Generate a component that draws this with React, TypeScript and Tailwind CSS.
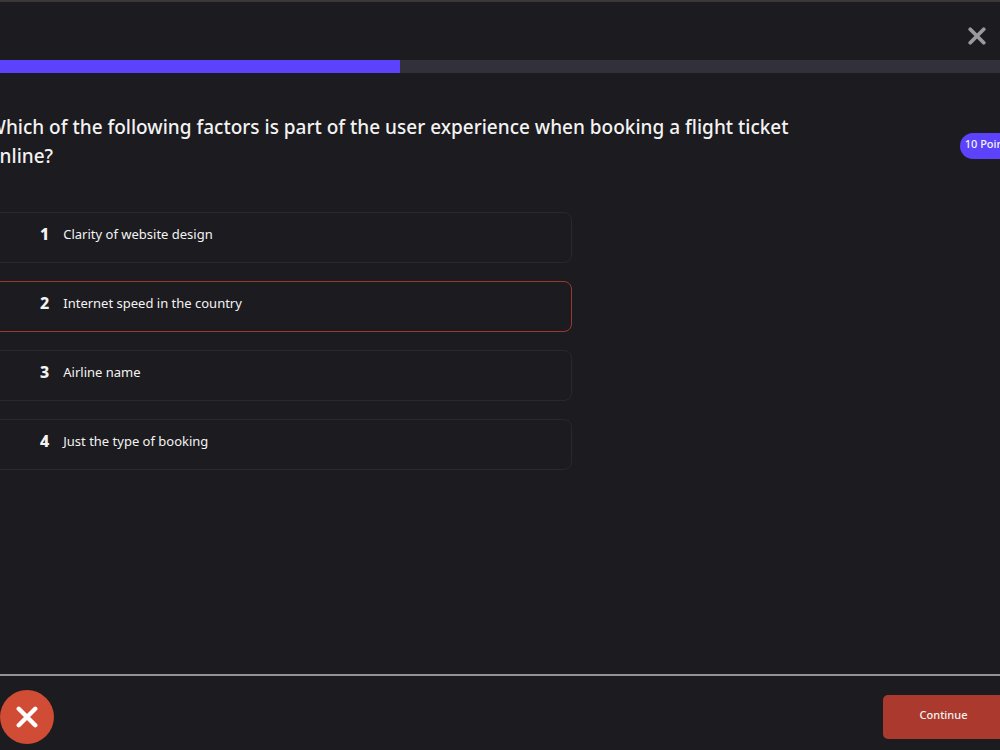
import { useState } from "react";

const options = [
  "Clarity of website design",
  "Internet speed in the country",
  "Airline name",
  "Just the type of booking",
];

function Cross({ className, weight }: { className: string; weight: number }) {
  return (
    <svg viewBox="0 0 24 24" fill="none" stroke="currentColor" strokeWidth={weight} strokeLinecap="round" className={className} aria-hidden="true">
      <path d="M3 3 21 21M21 3 3 21" />
    </svg>
  );
}

export default function App() {
  const [selected, setSelected] = useState(1);

  return (
    <div className="flex min-h-screen flex-col overflow-hidden border-t-2 border-[#3c3837] bg-[#1c1b1f] font-['Noto_Sans',sans-serif] text-[#f3f3f3]">
      <header className="flex h-[58px] items-center justify-end pt-2.5 pr-[11px]">
        <button type="button" aria-label="Close" className="flex size-6 items-center justify-center text-[#9a999f]">
          <Cross className="size-[18px]" weight={5} />
        </button>
      </header>

      <div role="progressbar" aria-label="Quiz progress" aria-valuenow={40} aria-valuemin={0} aria-valuemax={100} className="h-[13px] bg-[#32313b]">
        <div className="h-full w-2/5 bg-[#5c42fb]" />
      </div>

      <main className="-ml-3 flex-1 pt-10">
        <div className="-mr-[18px] flex items-start justify-between">
          <h1 className="max-w-[830px] text-[19px] leading-[29px] font-medium">
            Which of the following factors is part of the user experience when booking a flight ticket online?
          </h1>
          <span className="mt-5 flex h-[26px] shrink-0 items-start rounded-full bg-[#5c42fb] px-[5px] pt-[3px] text-[11px] leading-4 font-medium whitespace-nowrap">
            10 Points
          </span>
        </div>

        <ol className="mt-[41px] flex max-w-[584px] flex-col gap-[18px]">
          {options.map((option, index) => (
            <li key={option}>
              <button
                type="button"
                aria-pressed={selected === index}
                onClick={() => setSelected(index)}
                className={`flex h-[51px] w-full items-start gap-3.5 rounded-lg border pt-[11px] pl-[51px] text-left leading-5 ${
                  selected === index ? "border-[#9d382f]" : "border-[#29282d]"
                }`}
              >
                <span className="text-[16px] font-extrabold">{index + 1}</span>
                <span className="text-[13px]">{option}</span>
              </button>
            </li>
          ))}
        </ol>
      </main>

      <footer className="flex h-[76px] items-start justify-between border-t-2 border-[#929596]">
        <span role="img" aria-label="Incorrect answer" className="mt-3.5 flex size-[54px] items-center justify-center rounded-full bg-[#d04c35] text-white">
          <Cross className="size-[22px]" weight={4.8} />
        </span>
        <button type="button" className="mt-[19px] -mr-1 flex h-11 w-[121px] justify-center rounded-[5px] bg-[#ab392e] pt-3 text-[11px] leading-4 font-medium">
          Continue
        </button>
      </footer>
    </div>
  );
}
